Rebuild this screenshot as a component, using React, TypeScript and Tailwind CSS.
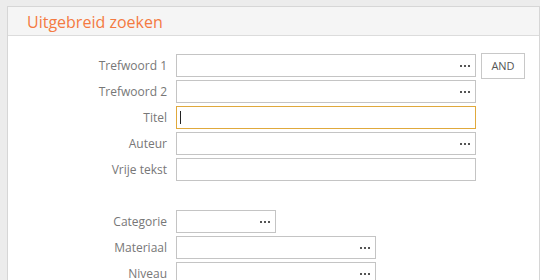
import React from "react";

function Field({ label, width, dots, focused, right }: { label: string; width: number; dots?: boolean; focused?: boolean; right?: React.ReactNode }) {
  return (
    <div className="flex items-start h-[26px]">
      <div className="w-[159px] text-right text-[12px] leading-[23px] text-[#777777]">{label}</div>
      <div className="ml-[9px] flex items-start">
        <div
          style={{ width }}
          className={
            "relative h-[23px] bg-white border " +
            (focused ? "border-[#e0a93c]" : "border-[#c4c4c4]")
          }
        >
          {focused && <div className="absolute left-[3px] top-[4px] w-[1px] h-[13px] bg-[#222]" />}
          {dots && (
            <div className="absolute right-[5px] top-0 h-full flex items-center gap-[2px]">
              <span className="w-[2px] h-[2px] bg-[#555]" />
              <span className="w-[2px] h-[2px] bg-[#555]" />
              <span className="w-[2px] h-[2px] bg-[#555]" />
            </div>
          )}
        </div>
        {right}
      </div>
    </div>
  );
}

export default function App() {
  return (
    <div className="w-[540px] h-[280px] overflow-hidden bg-[#ececec] pt-[6px] pl-[7px]" style={{ fontFamily: '"Open Sans", sans-serif' }}>
      <div className="bg-white border border-[#d6d6d6] h-[300px]">
        <div className="h-[29px] bg-[#f5f5f5] border-b border-[#dcdcdc] pl-[19px] flex items-center">
          <span className="text-[16px] text-[#f47a42] leading-[20px] mt-[1px]">Uitgebreid zoeken</span>
        </div>
        <div className="pt-[18px]">
          <Field
            label="Trefwoord 1"
            width={300}
            dots
            right={
              <div className="ml-[5px] -mt-[1px] w-[44px] h-[26px] border border-[#c8c8c8] flex items-center justify-center text-[11px] text-[#555]">
                AND
              </div>
            }
          />
          <Field label="Trefwoord 2" width={300} dots />
          <Field label="Titel" width={300} focused />
          <Field label="Auteur" width={300} dots />
          <Field label="Vrije tekst" width={300} />
          <div className="h-[26px]" />
          <Field label="Categorie" width={100} dots />
          <Field label="Materiaal" width={200} dots />
          <Field label="Niveau" width={200} dots />
        </div>
      </div>
    </div>
  );
}
